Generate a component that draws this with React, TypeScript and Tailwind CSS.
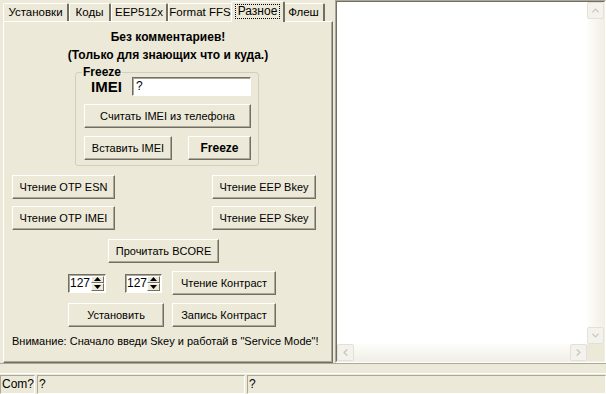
import React from 'react';
import { ChevronUp, ChevronDown, ChevronLeft, ChevronRight } from 'lucide-react';

const btnCls =
  'h-[24px] flex items-center justify-center bg-[#ece9d8] border border-t-white border-l-white border-r-[#716f64] border-b-[#716f64] shadow-[inset_-1px_-1px_0_#aca899] text-black whitespace-nowrap';

function Btn({ w, ml, bold, children }: { w: string; ml: string; bold?: boolean; children: React.ReactNode }) {
  return <div className={`${btnCls} ${w} ${ml} ${bold ? 'font-bold text-[12px]' : ''}`}>{children}</div>;
}

function Spin({ w, ml }: { w: string; ml: string }) {
  return (
    <div className={`${w} ${ml} h-[19px] flex bg-white border border-t-[#716f64] border-l-[#716f64] border-r-white border-b-white shadow-[inset_1px_1px_0_#aca899]`}>
      <span className="flex-1 pl-[1px] leading-[17px] text-[12px]">127</span>
      <div className="w-[14px] flex flex-col py-[1px] pr-[1px]">
        <div className="flex-1 flex items-center justify-center bg-[#ece9d8] border border-t-white border-l-white border-r-[#716f64] border-b-[#716f64]">
          <svg width="7" height="4" viewBox="0 0 7 4"><path d="M3.5 0L7 4H0z" fill="#000" /></svg>
        </div>
        <div className="flex-1 flex items-center justify-center bg-[#ece9d8] border border-t-white border-l-white border-r-[#716f64] border-b-[#716f64]">
          <svg width="7" height="4" viewBox="0 0 7 4"><path d="M0 0H7L3.5 4z" fill="#000" /></svg>
        </div>
      </div>
    </div>
  );
}

const tabs = [
  { label: 'Установки', w: 'w-[66px]' },
  { label: 'Коды', w: 'w-[42px]' },
  { label: 'EEP512x', w: 'w-[57px]' },
  { label: 'Format FFS', w: 'w-[65px]' },
  { label: 'Разное', w: 'w-[54px]', active: true },
  { label: 'Флеш', w: 'w-[42px]' },
];

const sbBtn =
  'flex items-center justify-center bg-[#f3f2ec] border border-[#e3e1d6] rounded-[2px] text-[#c9c7bb]';

export default function App() {
  return (
    <div
      className="w-[606px] h-[394px] bg-[#ece9d8] text-black text-[11px] overflow-hidden flex flex-col"
      style={{ fontFamily: '"Liberation Sans", Arial, sans-serif' }}
    >
      <div className="flex h-[363px]">
        {/* Left: tab control */}
        <div className="w-[335px] flex flex-col">
          <div className="h-[21px] pl-[3px] flex items-end">
            {tabs.map((t) =>
              t.active ? (
                <div
                  key={t.label}
                  className={`${t.w} -mx-[2px] h-[21px] -mb-[1px] relative z-10 bg-[#ece9d8] border-t border-l border-t-white border-l-white border-r-2 border-r-[#716f64] rounded-t-[2px] flex items-start justify-center pt-[2px] whitespace-nowrap`}
                >
                  <span className="border border-dotted border-black px-[2px] leading-[13px] h-[15px] text-[12px]">{t.label}</span>
                </div>
              ) : (
                <div
                  key={t.label}
                  className={`${t.w} h-[18px] bg-[#ece9d8] border-t border-l border-t-white border-l-white border-r-2 border-r-[#716f64] rounded-t-[2px] flex items-center justify-center text-[11.5px] whitespace-nowrap`}
                >
                  {t.label}
                </div>
              )
            )}
          </div>
          <div className="ml-[3px] w-[330px] h-[342px] border border-t-white border-l-white border-r-[#716f64] border-b-[#716f64] shadow-[inset_-1px_-1px_0_#aca899] flex flex-col">
            <div className="mt-[7px] h-[16px] leading-[16px] text-center font-bold text-[12px]">Без комментариев!</div>
            <div className="mt-[2px] h-[16px] leading-[16px] text-center font-bold text-[12px]">(Только для знающих что и куда.)</div>

            {/* Freeze group */}
            <div className="mt-[3px] ml-[71px] w-[184px] pt-[6px]">
              <div className="relative h-[94px] border border-[#d0d0bf] rounded-[3px] flex flex-col">
                <span className="absolute -top-[8px] left-[6px] bg-[#ece9d8] px-[1px] font-bold text-[12px] leading-[14px]">Freeze</span>
                <div className="mt-[4px] flex items-center">
                  <span className="ml-[15px] w-[30px] font-bold text-[15px] leading-[19px]">IMEI</span>
                  <div className="ml-[11px] w-[119px] h-[19px] bg-white border border-t-[#716f64] border-l-[#716f64] border-r-white border-b-white shadow-[inset_1px_1px_0_#aca899] pl-[3px] leading-[16px] text-[12px]">
                    ?
                  </div>
                </div>
                <div className="mt-[8px] flex">
                  <Btn w="w-[167px]" ml="ml-[8px]">Считать IMEI из телефона</Btn>
                </div>
                <div className="mt-[8px] flex">
                  <Btn w="w-[88px]" ml="ml-[8px]">Вставить IMEI</Btn>
                  <Btn w="w-[63px]" ml="ml-[16px]" bold>Freeze</Btn>
                </div>
              </div>
            </div>

            <div className="mt-[9px] flex">
              <Btn w="w-[103px]" ml="ml-[8px]">Чтение OTP ESN</Btn>
              <Btn w="w-[104px]" ml="ml-[97px]">Чтение EEP Bkey</Btn>
            </div>
            <div className="mt-[7px] flex">
              <Btn w="w-[103px]" ml="ml-[8px]">Чтение OTP IMEI</Btn>
              <Btn w="w-[104px]" ml="ml-[97px]">Чтение EEP Skey</Btn>
            </div>
            <div className="mt-[9px] flex">
              <Btn w="w-[111px]" ml="ml-[104px]">Прочитать BCORE</Btn>
            </div>
            <div className="mt-[8px] flex items-center">
              <Spin w="w-[38px]" ml="ml-[64px]" />
              <Spin w="w-[37px]" ml="ml-[19px]" />
              <Btn w="w-[104px]" ml="ml-[10px]">Чтение Контраст</Btn>
            </div>
            <div className="mt-[8px] flex">
              <Btn w="w-[96px]" ml="ml-[64px]">Установить</Btn>
              <Btn w="w-[104px]" ml="ml-[8px]">Запись Контраст</Btn>
            </div>
            <div className="mt-[6px] ml-[8px] h-[16px] leading-[16px] text-[11px] whitespace-nowrap">
              Внимание: Сначало введи Skey и работай в "Service Mode"!
            </div>
          </div>
        </div>

        {/* Right: memo */}
        <div className="flex-1 border border-t-[#aca899] border-l-[#aca899] border-r-white border-b-white">
          <div className="h-full border border-t-[#716f64] border-l-[#716f64] border-r-[#f1efe2] border-b-[#f1efe2] flex flex-col">
            <div className="flex-1 flex">
              <div className="flex-1 bg-white" />
              <div className="w-[17px] bg-gradient-to-r from-[#fdfdfb] to-[#f1efe6] flex flex-col justify-between">
                <div className={`${sbBtn} h-[17px]`}>
                  <ChevronUp size={11} strokeWidth={3} />
                </div>
                <div className={`${sbBtn} h-[17px]`}>
                  <ChevronDown size={11} strokeWidth={3} />
                </div>
              </div>
            </div>
            <div className="h-[17px] flex">
              <div className="flex-1 bg-gradient-to-b from-[#fdfdfb] to-[#f1efe6] flex justify-between">
                <div className={`${sbBtn} w-[17px]`}>
                  <ChevronLeft size={11} strokeWidth={3} />
                </div>
                <div className={`${sbBtn} w-[17px]`}>
                  <ChevronRight size={11} strokeWidth={3} />
                </div>
              </div>
              <div className="w-[17px] bg-[#ece9d8]" />
            </div>
          </div>
        </div>
      </div>

      <div className="h-[1px] bg-[#aca899]" />
      <div className="h-[9px]" />
      <div className="h-[1px] bg-white" />
      <div className="h-[1px]" />

      {/* Status bar */}
      <div className="h-[19px] flex gap-[2px]">
        {[
          { w: 'w-[35px]', t: 'Com?' },
          { w: 'w-[208px]', t: '?' },
          { w: 'flex-1', t: '?' },
        ].map((p, i) => (
          <div
            key={i}
            className={`${p.w} border border-t-[#aca899] border-l-[#aca899] border-r-white border-b-white pl-[1px] leading-[17px] text-[12px]`}
          >
            {p.t}
          </div>
        ))}
      </div>
    </div>
  );
}
